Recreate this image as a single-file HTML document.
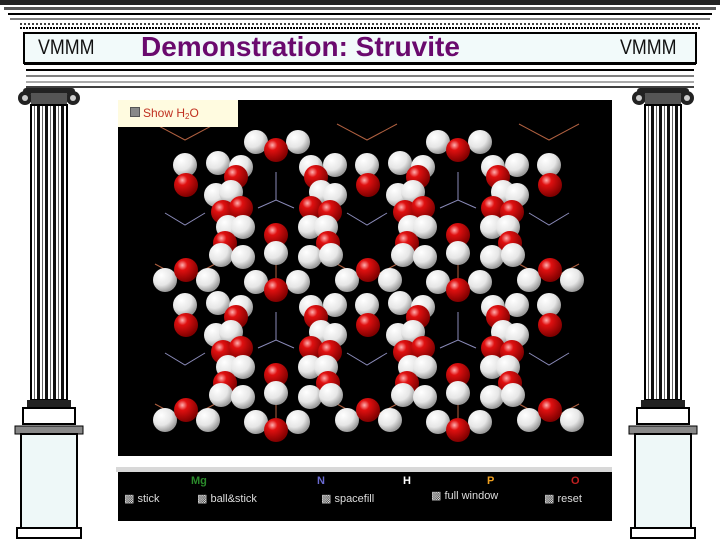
<!DOCTYPE html>
<html><head><meta charset="utf-8"><style>
html,body{margin:0;width:720px;height:540px;overflow:hidden;background:#fff;font-family:"Liberation Sans",sans-serif;position:relative}
.abs{position:absolute}
</style></head><body>
<svg class="abs" style="left:0;top:0" width="720" height="540">
<defs>
<pattern id="fl" width="8" height="10" patternUnits="userSpaceOnUse"><rect width="8" height="10" fill="#fff"/><rect x="0" width="3" height="10" fill="#111"/><rect x="5" width="1" height="10" fill="#666"/></pattern>
<g id="col">
 <rect x="-22" y="0" width="52" height="6" rx="3" fill="#222"/>
 <circle cx="-20" cy="10" r="7" fill="#222"/><circle cx="28" cy="10" r="7" fill="#222"/>
 <circle cx="-20" cy="10" r="3" fill="#ccc"/><circle cx="28" cy="10" r="3" fill="#ccc"/>
 <rect x="-14" y="5" width="36" height="12" fill="#555"/>
 <rect x="-14" y="17" width="36" height="295" fill="url(#fl)"/>
 <rect x="-14" y="17" width="36" height="295" fill="none" stroke="#000" stroke-width="2"/>
 <rect x="-18" y="312" width="44" height="8" fill="#222"/>
 <rect x="-22" y="320" width="52" height="16" fill="#fff" stroke="#000" stroke-width="2"/>
 <rect x="-30" y="338" width="68" height="8" fill="#888" stroke="#000"/>
 <rect x="-24" y="346" width="56" height="94" fill="#eef8f8" stroke="#000" stroke-width="2"/>
 <rect x="-28" y="440" width="64" height="10" fill="#fff" stroke="#000" stroke-width="2"/>
</g>
</defs>
<rect x="0" y="0" width="720" height="5" fill="#222"/>
<rect x="4" y="7" width="712" height="3" fill="#555"/>
<line x1="8" y1="14" x2="712" y2="14" stroke="#000" stroke-width="2"/>
<line x1="10" y1="19" x2="710" y2="19" stroke="#000"/>
<line x1="20" y1="24" x2="700" y2="24" stroke="#000" stroke-width="1.5" stroke-dasharray="2 2"/>
<line x1="20" y1="28" x2="700" y2="28" stroke="#000" stroke-width="2" stroke-dasharray="2 1"/>
<rect x="24" y="33" width="672" height="30" fill="#f2fafa" stroke="#000" stroke-width="2"/>
<line x1="24" y1="64" x2="696" y2="64" stroke="#000" stroke-width="2"/>
<line x1="26" y1="70" x2="694" y2="70" stroke="#000" stroke-width="2"/>
<line x1="26" y1="76" x2="694" y2="76" stroke="#000"/>
<line x1="26" y1="82" x2="694" y2="82" stroke="#555"/>
<line x1="26" y1="87" x2="694" y2="87" stroke="#000" stroke-width="1.5"/>
<use href="#col" x="45" y="88"/>
<use href="#col" x="659" y="88"/>
</svg>
<div class="abs" style="left:38px;top:36px;font-size:21px;color:#111;transform:scaleX(.85);transform-origin:left">VMMM</div>
<div class="abs" style="left:620px;top:36px;font-size:21px;color:#111;transform:scaleX(.85);transform-origin:left">VMMM</div>
<div class="abs" style="left:141px;top:31px;font-size:28px;font-weight:bold;color:#6a0a6e">Demonstration: Struvite</div>

<svg class="abs" style="left:118px;top:100px" width="494" height="356" viewBox="118 100 494 356">
<defs>
<radialGradient id="w" cx="35%" cy="30%" r="70%"><stop offset="0" stop-color="#fff"/><stop offset=".6" stop-color="#e6e6e6"/><stop offset="1" stop-color="#9a9a9a"/></radialGradient>
<radialGradient id="r" cx="35%" cy="30%" r="70%"><stop offset="0" stop-color="#ffb0b0"/><stop offset=".3" stop-color="#e01010"/><stop offset="1" stop-color="#800000"/></radialGradient>
<path id="P" d="M155 124L185 140L215 124" stroke="#b06040" fill="none"/>
<g id="T"><circle cx="256" cy="142" r="12" fill="url(#w)"/><circle cx="298" cy="142" r="12" fill="url(#w)"/><circle cx="276" cy="150" r="12" fill="url(#r)"/></g>
<g id="M"><use href="#P"/><circle cx="165" cy="140" r="12" fill="url(#w)"/><circle cx="208" cy="140" r="12" fill="url(#w)"/><circle cx="186" cy="130" r="12" fill="url(#r)"/></g>
<g id="A0">
 <path d="M165 213L185 225L205 213" stroke="#8a8ab8" fill="none"/>
 <circle cx="185" cy="165" r="12" fill="url(#w)"/><circle cx="186" cy="185" r="12" fill="url(#r)"/>
</g>
<g id="A1">
 <circle cx="218" cy="163" r="12" fill="url(#w)"/><circle cx="241" cy="167" r="12" fill="url(#w)"/>
 <circle cx="236" cy="177" r="12" fill="url(#r)"/>
 <circle cx="216" cy="195" r="12" fill="url(#w)"/><circle cx="231" cy="192" r="12" fill="url(#w)"/>
 <circle cx="223" cy="212" r="12" fill="url(#r)"/><circle cx="241" cy="208" r="12" fill="url(#r)"/>
 <circle cx="228" cy="227" r="12" fill="url(#w)"/><circle cx="243" cy="227" r="12" fill="url(#w)"/>
 <circle cx="225" cy="243" r="12" fill="url(#r)"/>
 <circle cx="221" cy="255" r="12" fill="url(#w)"/><circle cx="243" cy="257" r="12" fill="url(#w)"/>
</g>
<g id="B">
 <path d="M276 172V200M258 208L276 200L294 208" stroke="#8a8ab8" fill="none"/>
 <path d="M276 262V285" stroke="#b06040" fill="none"/>
 <circle cx="311" cy="167" r="12" fill="url(#w)"/><circle cx="335" cy="165" r="12" fill="url(#w)"/>
 <circle cx="316" cy="177" r="12" fill="url(#r)"/>
 <circle cx="321" cy="192" r="12" fill="url(#w)"/><circle cx="335" cy="195" r="12" fill="url(#w)"/>
 <circle cx="311" cy="208" r="12" fill="url(#r)"/><circle cx="330" cy="212" r="12" fill="url(#r)"/>
 <circle cx="310" cy="227" r="12" fill="url(#w)"/><circle cx="326" cy="227" r="12" fill="url(#w)"/>
 <circle cx="328" cy="243" r="12" fill="url(#r)"/><circle cx="276" cy="235" r="12" fill="url(#r)"/>
 <circle cx="310" cy="257" r="12" fill="url(#w)"/><circle cx="331" cy="255" r="12" fill="url(#w)"/><circle cx="276" cy="253" r="12" fill="url(#w)"/>
</g>
</defs>
<rect x="118" y="100" width="494" height="356" fill="#000"/>
<use href="#P"/><use href="#P" x="182"/><use href="#P" x="364"/>
<use href="#M" y="140"/><use href="#M" x="182" y="140"/><use href="#M" x="364" y="140"/>
<use href="#M" y="280"/><use href="#M" x="182" y="280"/><use href="#M" x="364" y="280"/>
<use href="#A0"/><use href="#A0" x="182"/><use href="#A0" x="364"/>
<use href="#A0" y="140"/><use href="#A0" x="182" y="140"/><use href="#A0" x="364" y="140"/>
<use href="#A1"/><use href="#A1" x="182"/>
<use href="#A1" y="140"/><use href="#A1" x="182" y="140"/>
<use href="#B"/><use href="#B" x="182"/>
<use href="#B" y="140"/><use href="#B" x="182" y="140"/>
<use href="#T"/><use href="#T" x="182"/>
<use href="#T" y="140"/><use href="#T" x="182" y="140"/>
<use href="#T" y="280"/><use href="#T" x="182" y="280"/>
</svg>
<div class="abs" style="left:118px;top:100px;width:120px;height:27px;background:#fffbe0;font-size:12px;color:#c03020;line-height:27px;overflow:hidden"><span style="display:inline-block;width:8px;height:8px;background:#888;border:1px solid #555;margin:0 3px 0 12px"></span>Show H<span style="font-size:8px;vertical-align:-2px">2</span>O</div>

<div class="abs" style="left:116px;top:467px;width:496px;height:5px;background:#d8d8d8"></div>
<div class="abs" style="left:118px;top:472px;width:494px;height:49px;background:#000;font-size:11px;color:#ddd">
 <span class="abs" style="left:73px;top:3px;color:#2a8a2a;font-weight:bold">Mg</span>
 <span class="abs" style="left:199px;top:3px;color:#6a6ad0;font-weight:bold">N</span>
 <span class="abs" style="left:285px;top:3px;color:#fff;font-weight:bold">H</span>
 <span class="abs" style="left:369px;top:3px;color:#f0a020;font-weight:bold">P</span>
 <span class="abs" style="left:453px;top:3px;color:#c02020;font-weight:bold">O</span>
 <span class="abs" style="left:6px;top:20px">▩ stick</span>
 <span class="abs" style="left:79px;top:20px">▩ ball&amp;stick</span>
 <span class="abs" style="left:203px;top:20px">▩ spacefill</span>
 <span class="abs" style="left:313px;top:17px">▩ full window</span>
 <span class="abs" style="left:426px;top:20px">▩ reset</span>
</div>
</body></html>
